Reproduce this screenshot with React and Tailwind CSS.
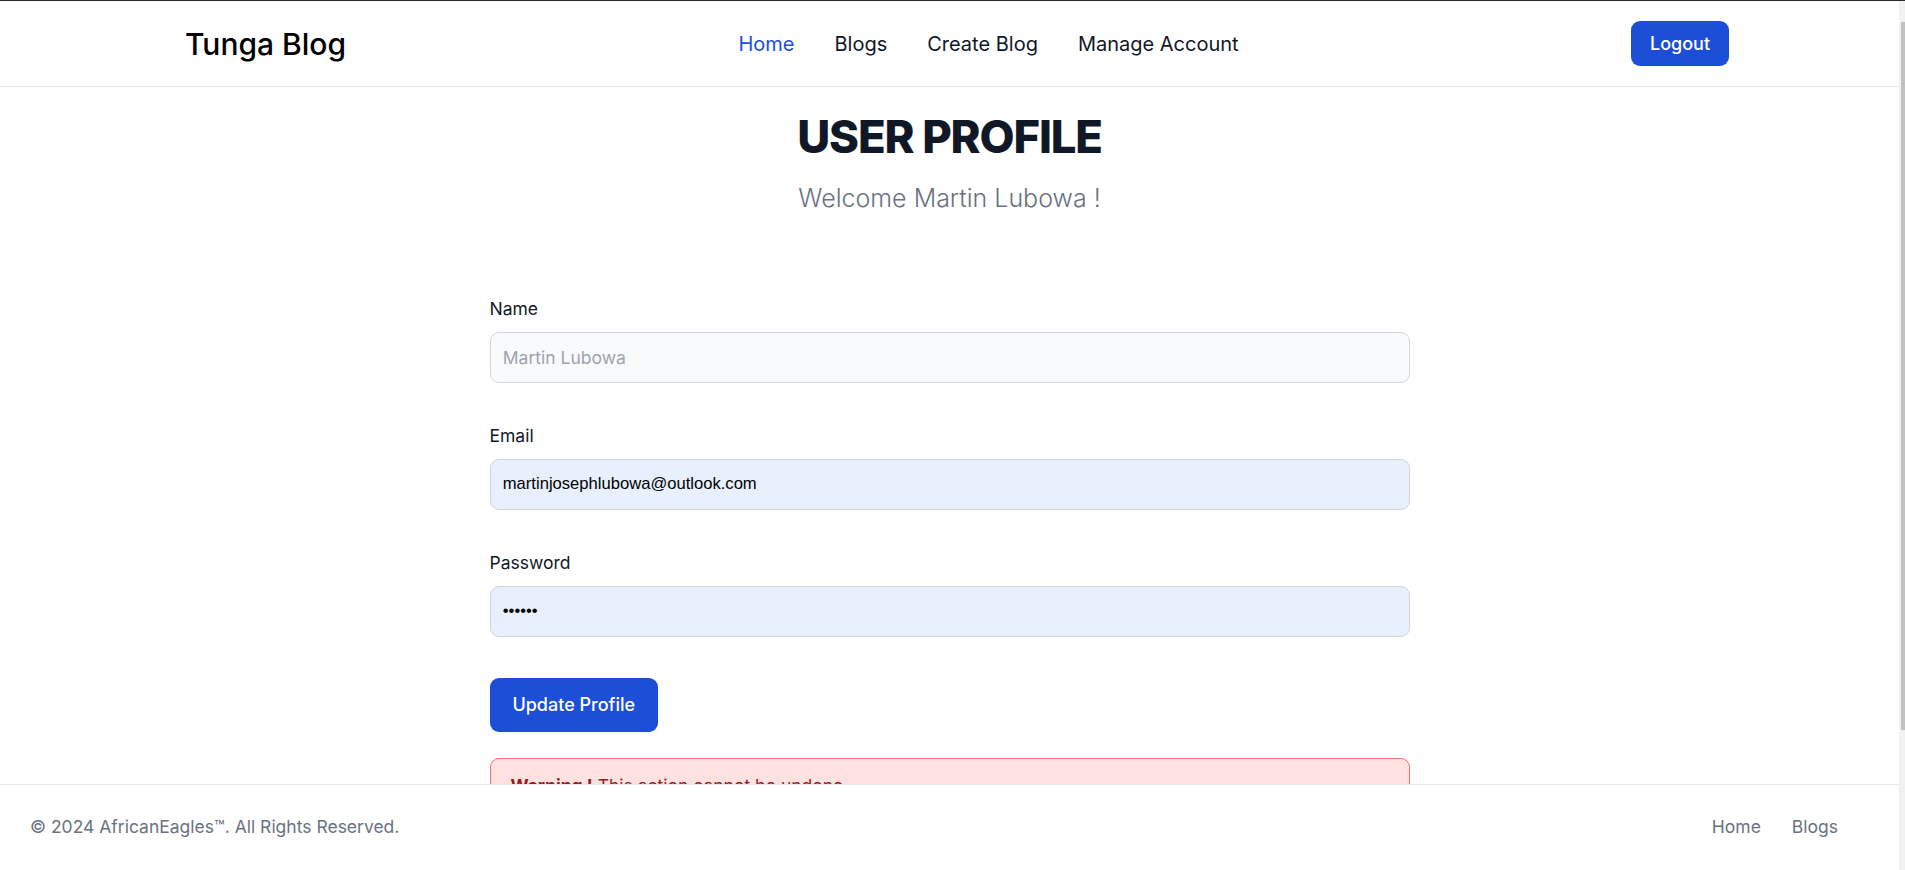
import React from "react";

export default function App() {
  return (
    <div className="relative h-[870px] w-full overflow-hidden bg-white font-[Inter,sans-serif]">
      <div className="relative h-full w-[1899px] border-t border-[#2b2b2b]">
        {/* Navbar */}
        <nav className="h-[86px] border-b border-[#e5e7eb] bg-white">
          <div className="ml-[185px] flex h-full w-[1544px] items-center justify-between">
            <span className="text-[30px] font-medium leading-none text-black">Tunga Blog</span>
            <ul className="flex items-center gap-10 text-xl text-gray-900">
              <li className="text-[#1d4ed8]">Home</li>
              <li>Blogs</li>
              <li>Create Blog</li>
              <li>Manage Account</li>
            </ul>
            <button className="h-[45px] w-[98px] rounded-[9px] bg-[#1d4ed8] text-lg font-medium text-white">
              Logout
            </button>
          </div>
        </nav>

        {/* Main */}
        <main className="mx-auto w-[920px]">
          <h1 className="mt-[27px] text-center text-[45.4px] font-extrabold leading-none tracking-tight text-gray-900">
            USER PROFILE
          </h1>
          <p className="mt-[22.5px] text-center text-[25px] font-light leading-8 text-gray-500">
            Welcome Martin Lubowa !
          </p>

          <form className="mt-[82px]">
            <div className="mb-[40.6px]">
              <label className="mb-[9.6px] block text-[17.5px] leading-[26px] text-gray-900">Name</label>
              <input
                type="text"
                readOnly
                placeholder="Martin Lubowa"
                className="block h-[51px] w-full rounded-[9px] border border-[#d1d5db] bg-[#f9fafb] px-[12.3px] text-[17.5px] text-gray-900 outline-none placeholder:text-[#9ca3af]"
              />
            </div>
            <div className="mb-[40.6px]">
              <label className="mb-[9.6px] block text-[17.5px] leading-[26px] text-gray-900">Email</label>
              <input
                type="email"
                readOnly
                value="martinjosephlubowa@outlook.com"
                className="block h-[51px] w-full rounded-[9px] border border-[#d1d5db] bg-[#e8f0fe] px-[12.3px] font-['Liberation_Sans',Arial,sans-serif] text-[16.6px] text-black outline-none"
              />
            </div>
            <div>
              <label className="mb-[9.6px] block text-[17.5px] leading-[26px] text-gray-900">Password</label>
              <input
                type="password"
                readOnly
                value="123456"
                className="block h-[51px] w-full rounded-[9px] border border-[#d1d5db] bg-[#e8f0fe] px-[12.3px] font-['Liberation_Sans',Arial,sans-serif] text-[16.6px] text-black outline-none"
              />
            </div>
            <button
              type="button"
              className="mt-[41px] h-[54.5px] w-[168.5px] rounded-[9px] bg-[#1d4ed8] text-lg font-medium text-white"
            >
              Update Profile
            </button>
            <div className="mt-[25.6px] rounded-[9px] border border-[#f87171] bg-[#fee2e2] px-5 py-[14px] text-[17.5px] leading-[26px] text-[#991b1b]">
              <span className="font-bold">Warning !</span> This action cannot be undone.
            </div>
          </form>
        </main>

        {/* Footer */}
        <footer className="absolute bottom-0 left-0 flex h-[86px] w-full items-center justify-between border-t border-[#e5e7eb] bg-white px-[30px] text-[17.5px] text-gray-500">
          <span>© 2024 AfricanEagles™. All Rights Reserved.</span>
          <ul className="mr-[31px] flex items-center gap-[31px]">
            <li>Home</li>
            <li>Blogs</li>
          </ul>
        </footer>
      </div>

      {/* Scrollbar */}
      <div className="absolute right-0 top-0 h-full w-[6px] bg-[#f1f1f1]">
        <div className="absolute right-0 top-[22px] h-[708px] w-[4.5px] bg-[#c1c1c1]" />
      </div>
      <div className="absolute left-0 top-0 h-px w-full bg-[#2b2b2b]" />
    </div>
  );
}
